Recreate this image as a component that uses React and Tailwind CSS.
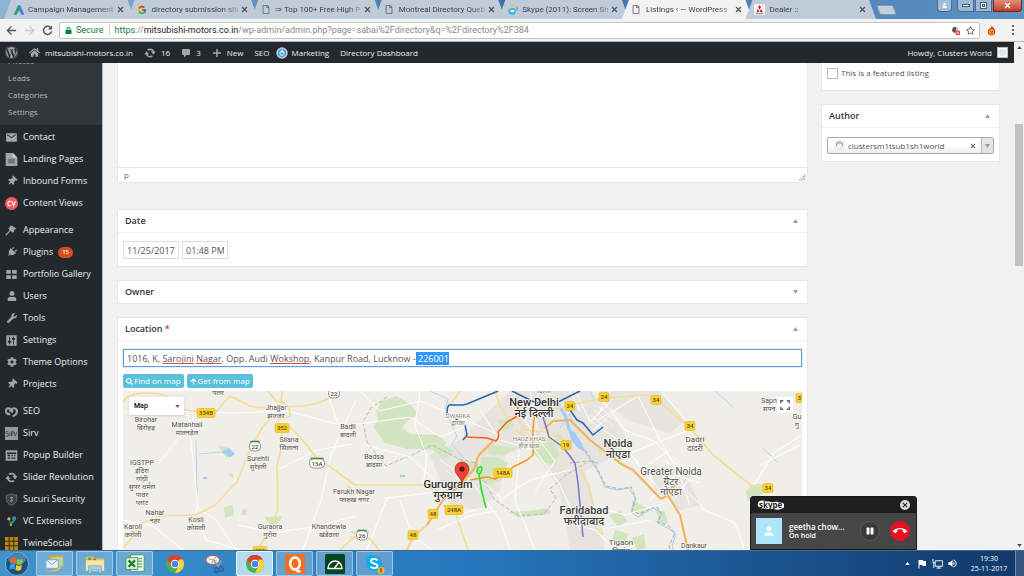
import React, { useEffect, useRef } from "react";
import {
  FaWordpress, FaHome, FaPlug, FaWrench, FaCog, FaSearch, FaArrowUp, FaThumbtack,
  FaLock, FaRegFile, FaRegStar, FaPause, FaUser,
} from "react-icons/fa";
import { FcGoogle } from "react-icons/fc";
import { MdEmail, MdCallEnd, MdPerson, MdVolumeUp, MdFlag } from "react-icons/md";

/* ---------- shared icons ---------- */

const UpdateIcon = ({ className }) => (
  <svg viewBox="0 0 20 20" className={className} fill="currentColor" aria-hidden="true">
    <path d="M10 2.500a7.500 7.500 0 0 1 7 5.200h2.500L15.500 13l-4-5.300h2.600A4.700 4.700 0 0 0 7.200 6.200L5.300 4.200A7.500 7.500 0 0 1 10 2.500zM.5 12.300L4.500 7l4 5.300H5.900a4.700 4.700 0 0 0 6.900 1.500l1.900 2A7.500 7.500 0 0 1 3 12.300z" />
  </svg>
);
const CommentIcon = ({ className }) => (
  <svg viewBox="0 0 20 20" className={className} fill="currentColor" aria-hidden="true">
    <path d="M4 2h12a2 2 0 0 1 2 2v8a2 2 0 0 1-2 2h-5l-5 5v-5H4a2 2 0 0 1-2-2V4a2 2 0 0 1 2-2z" />
  </svg>
);
const PlusIcon = ({ className }) => (
  <svg viewBox="0 0 20 20" className={className} fill="currentColor" aria-hidden="true">
    <path d="M8.500 2h3v6.500H18v3h-6.500V18h-3v-6.500H2v-3h6.500z" />
  </svg>
);
const PowerIcon = ({ className }) => (
  <svg viewBox="0 0 20 20" className={className} aria-hidden="true">
    <circle cx="10" cy="10" r="9.500" fill="#c9cdd0" />
    <circle cx="10" cy="10" r="7" fill="#3aa0d8" />
    <circle cx="10" cy="10.500" r="3.500" fill="none" stroke="#fff" strokeWidth="1.500" />
    <path d="M10 4.500v5" stroke="#fff" strokeWidth="2" />
  </svg>
);
const PageIcon = ({ className }) => (
  <svg viewBox="0 0 20 20" className={className} aria-hidden="true">
    <path d="M1 0h11l7 7v13H1z" fill="#a0a5aa" />
    <path d="M12 0v7h7" fill="#d4d7da" />
    <path d="M5 9h10v7H5z" fill="#6c7278" />
  </svg>
);
const CvIcon = ({ className }) => (
  <svg viewBox="0 0 20 20" className={className} aria-hidden="true">
    <circle cx="10" cy="10" r="10" fill="#ff5a5f" />
    <path d="M9 7.500A3 3 0 1 0 9 12.500M10.500 6.500l2.700 7 2.700-7" fill="none" stroke="#fff" strokeWidth="1.800" />
  </svg>
);
const BrushIcon = ({ className }) => (
  <svg viewBox="0 0 20 20" className={className} fill="currentColor" aria-hidden="true">
    <path d="M9 2l9 5-3 1-1 3-3 1-2-2-7 8-1.500-1.500L8 9 6.500 7z" />
    <path d="M7 5l7 7-2 2-7-7z" />
  </svg>
);
const GridIcon = ({ className }) => (
  <svg viewBox="0 0 20 20" className={className} fill="currentColor" aria-hidden="true">
    <path d="M2 3h7v6H2zM11 3h7v6h-7zM2 11h7v6H2zM11 11h7v6h-7z" />
  </svg>
);
const SlidersIcon = ({ className }) => (
  <svg viewBox="0 0 20 20" className={className} aria-hidden="true">
    <rect x="2" y="2" width="16" height="16" rx="1" fill="#a0a5aa" />
    <path d="M7 4v12M13 4v12" stroke="#23282d" strokeWidth="1.500" />
    <path d="M4.500 12h5M10.500 7.500h5" stroke="#23282d" strokeWidth="3" />
  </svg>
);
const SeoIcon = ({ className }) => (
  <svg viewBox="0 0 20 20" className={className} fill="none" stroke="currentColor" strokeWidth="3.200" aria-hidden="true">
    <path d="M8 14C0 15-1 5 5.500 5c3.500 0 3.500 4 1.500 5M11.500 17c8-1 9-12 2.500-12-4.500 0-4.500 5-1.500 6" />
  </svg>
);
const SirvIcon = ({ className }) => (
  <svg viewBox="0 0 20 20" className={className} aria-hidden="true">
    <rect width="20" height="20" fill="#999" />
    <path d="M5 7H2v3h3v4H1M7.500 7v7M10 14V7h2.500v3.500H10l3 3.500M14 7l2 7 2.500-7" fill="none" stroke="#3c4147" strokeWidth="1.200" />
  </svg>
);
const PopupIcon = ({ className }) => (
  <svg viewBox="0 0 20 20" className={className} aria-hidden="true">
    <rect x="1" y="2" width="18" height="16" fill="#a0a5aa" />
    <path d="M3 6.500h14M4 10h4M4 14h4M10 10h2M14 10h2M10 14h6" stroke="#23282d" strokeWidth="2" />
  </svg>
);
const ShieldIcon = ({ className }) => (
  <svg viewBox="0 0 20 20" className={className} aria-hidden="true">
    <path d="M10 1c3 2 5 2 8 2v7c0 5-5 8-8 9-3-1-8-4-8-9V3c3 0 5 0 8-2z" fill="#3c4147" stroke="#82878c" />
    <path d="M12.500 7.500c-3-2-5 .5-2.500 2s2 4-2.500 2.500" fill="none" stroke="#c0c4c8" strokeWidth="1.500" />
  </svg>
);
const VcIcon = ({ className }) => (
  <svg viewBox="0 0 20 20" className={className} aria-hidden="true">
    <circle cx="6" cy="6" r="2.500" fill="#f0ad30" />
    <circle cx="14" cy="5" r="3" fill="#3f8fc8" />
    <path d="M5 7l4 4 5-5 2 2-5 6-1 4-2-4z" fill="#2a9a80" />
    <circle cx="9" cy="15" r="2" fill="#7ab648" />
  </svg>
);
const TwineIcon = ({ className }) => (
  <svg viewBox="0 0 20 20" className={className} aria-hidden="true">
    <rect width="20" height="20" fill="#b8860f" />
    <path d="M6.500 0v20M13.500 0v20M0 6.500h20M0 13.500h20" stroke="#2b2a20" strokeWidth="1.500" />
  </svg>
);
const ChromeLogo = ({ className }) => (
  <svg viewBox="0 0 20 20" className={className} aria-hidden="true">
    <circle cx="10" cy="10" r="10" fill="#4caf50" />
    <path d="M10 10L1.340 5A10 10 0 0 1 18.660 5z" fill="#e2402f" />
    <path d="M1.340 5L6 12.500 10 5.400h8.660A10 10 0 0 0 1.340 5z" fill="#e2402f" />
    <path d="M18.660 5A10 10 0 0 1 10 20l4.100-7.700L14 5.400z" fill="#fdd23c" />
    <circle cx="10" cy="10" r="4.700" fill="#fff" />
    <circle cx="10" cy="10" r="3.700" fill="#4285f4" />
  </svg>
);

/* ---------- browser chrome ---------- */

const AdwordsIcon = () => (
  <svg viewBox="0 0 20 20" className="size-3" aria-hidden="true">
    <path d="M8 2h4l7 16h-5L8 6z" fill="#3b83e0" />
    <path d="M8 3l3 6-5 9H1z" fill="#27a55a" />
  </svg>
);
const SkypeTabIcon = () => (
  <svg viewBox="0 0 20 20" className="size-3" aria-hidden="true">
    <path d="M2 11c0-5 12-6 13-1 0 5-2 8-6 8s-7-3-7-7z" fill="#3bb3e6" />
    <path d="M5 11c2-2 7-2 8 0s-6 4-8 1z" fill="#d8f1fb" />
    <path d="M5 7c2-5 10-6 12-2" fill="none" stroke="#e9c53c" strokeWidth="1.800" />
    <path d="M15 6c3 1 3 4 1 6" fill="none" stroke="#3bb3e6" strokeWidth="1.800" />
  </svg>
);
const MitsubishiIcon = () => (
  <svg viewBox="0 0 20 20" className="size-[11px] bg-[#eef0f2]" aria-hidden="true">
    <path d="M10 2l2.500 4-2.500 4-2.500-4zM7 9l2.500 3.500L8 15H4zM13 9l-2.500 3.500L12 15h4z" fill="#d8222a" />
    <path d="M3 17.500h14" stroke="#777" strokeWidth="1.500" />
  </svg>
);

const fileIcon = <FaRegFile className="h-[9px] w-[8px] text-[#666]" />;
const TABS = [
  { title: "Campaign Management", icon: <AdwordsIcon /> },
  { title: "directory submission site", icon: <FcGoogle className="size-[10px]" /> },
  { title: "⇒ Top 100+ Free High P", icon: fileIcon },
  { title: "Montreal Directory Queb", icon: fileIcon },
  { title: "Skype (2011): Screen Sha", icon: <SkypeTabIcon /> },
  { title: "Listings ‹ — WordPress", icon: fileIcon, active: true },
  { title: "Dealer ::", icon: <MitsubishiIcon /> },
];

function Cross({ className }) {
  return (
    <svg viewBox="0 0 10 10" className={className} aria-hidden="true">
      <path d="M1.500 1.500l7 7M8.500 1.500l-7 7" stroke="currentColor" strokeWidth="1.800" fill="none" />
    </svg>
  );
}

function TabStrip() {
  return (
    <div className="flex h-[19px] shrink-0 items-start justify-between bg-linear-to-r from-[#8fb3d4] via-[#3a6fa8] to-[#5f93c4]">
      <div className="flex h-full pl-1">
        <div className="flex h-full w-[865px]" role="tablist">
          {TABS.map((t) => (
            <div
              key={t.title}
              className={
                "-mr-[7px] flex min-w-0 flex-1 items-center pr-[9px] pl-[7px] [clip-path:polygon(7px_0,calc(100%-7px)_0,100%_100%,0_100%)] " +
                (t.active ? "relative bg-[#f2f2f2]" : "bg-[#bfcbd9]")
              }
            >
              <span className="flex w-[15px] shrink-0 justify-center">{t.icon}</span>
              <button
                role="tab"
                aria-selected={!!t.active}
                className="min-w-0 flex-1 whitespace-nowrap pl-[2px] text-left font-[Roboto,sans-serif] text-[8px] leading-[12px] text-[#3c3f44] [mask-image:linear-gradient(to_right,black_82%,rgba(0,0,0,0.3))]"
              >
                {t.title}
              </button>
              <button aria-label="Close tab" className="ml-px flex size-[10px] items-center justify-center text-[#555]">
                <Cross className="size-[7px]" />
              </button>
            </div>
          ))}
        </div>
        <button aria-label="New tab" className="ml-[9px] mt-[5px] h-[10px] w-[17px] skew-x-[20deg] rounded-[2px] border border-[#8296ad] bg-[#c3cedb]" />
      </div>
      <div className="flex gap-px pr-[2px] text-white">
        <button aria-label="Profile" className="mr-1 flex h-[12px] w-[15px] items-center justify-center rounded-b border border-t-0 border-[#4c6a8c] bg-[#a3bdd8]">
          <FaUser className="size-[5px]" />
        </button>
        <button aria-label="Minimize" className="flex h-[12px] w-[17px] items-center justify-center rounded-bl border border-t-0 border-[#4c6a8c] bg-[#9db9d6]">
          <span className="h-[3px] w-2 border border-[#4a5a70] bg-white" />
        </button>
        <button aria-label="Restore" className="flex h-[12px] w-[17px] items-center justify-center border border-t-0 border-[#4c6a8c] bg-[#9db9d6]">
          <span className="size-[7px] border border-[#4a5a70] bg-white p-px"><span className="block size-full border border-[#4a5a70]" /></span>
        </button>
        <button aria-label="Close" className="flex h-[12px] w-[29px] items-center justify-center rounded-br border border-t-0 border-[#6e2a20] bg-linear-to-b from-[#dd8f80] to-[#c23a22]">
          <Cross className="size-[7px]" />
        </button>
      </div>
    </div>
  );
}

function Toolbar() {
  return (
    <div className="flex h-[23px] shrink-0 items-center border-b border-[#b5b5b5] bg-[#f2f2f2] pr-[7px] pl-[6px]">
      <div className="flex items-center gap-[7px] pr-[6px]">
        <button aria-label="Back" className="text-[#555]">
          <svg viewBox="0 0 12 12" className="size-[11px]" fill="none" stroke="currentColor" strokeWidth="1.500"><path d="M11 6H2M6 1.500L1.500 6 6 10.500" /></svg>
        </button>
        <button aria-label="Forward" className="text-[#ccc]">
          <svg viewBox="0 0 12 12" className="size-[11px]" fill="none" stroke="currentColor" strokeWidth="1.500"><path d="M1 6h9M6 1.500L10.500 6 6 10.500" /></svg>
        </button>
        <button aria-label="Reload" className="text-[#555]">
          <svg viewBox="0 0 12 12" className="size-[11px]" fill="none" stroke="currentColor" strokeWidth="1.700"><path d="M10 3.500A4.500 4.500 0 1 0 10.500 7" /><path d="M11 .5v4.500H6.500z" fill="currentColor" stroke="none" /></svg>
        </button>
      </div>
      <div className="flex h-[17px] flex-1 items-center rounded-[2px] border border-[#c4c4c4] bg-white pr-1 pl-[5px] font-[Roboto,sans-serif] text-[9px] leading-[13px]">
        <FaLock className="size-[7px] text-[#0b8043]" />
        <span className="pl-[4px] text-[#0b8043]">Secure</span>
        <span className="mx-[5px] h-[10px] w-px bg-[#ccc]" />
        <span className="flex-1 text-[#8a8a8a]">
          <span className="text-[#0b8043]">https</span>://<span className="text-[#222]">mitsubishi-motors.co.in</span>/wp-admin/admin.php?page=sabai%2Fdirectory&amp;q=%2Fdirectory%2F384
        </span>
        <button aria-label="Location blocked" className="mr-[6px]">
          <svg viewBox="0 0 12 12" className="size-[9px]"><path d="M6 1a4 4 0 0 0-1 8l2-2V2z" fill="#555" /><path d="M7 2a4 4 0 0 1 2 3" stroke="#555" fill="none" /><rect x="6" y="6" width="6" height="6" rx="1" fill="#e0443a" /><path d="M7.500 7.500l3 3m0-3l-3 3" stroke="#fff" /></svg>
        </button>
        <button aria-label="Bookmark"><FaRegStar className="size-[9px] text-[#555]" /></button>
      </div>
      <button aria-label="Extension" className="ml-[7px]">
        <svg viewBox="0 0 12 14" className="h-[11px] w-[9px]"><path d="M6 0c1 2 5 4 5 8.500a5 5 0 0 1-10 0C1 6 3 4 4 4c1 0 2-2 2-4z" fill="#ea4a1f" /><circle cx="6" cy="9" r="3.500" fill="#f9a825" /><path d="M4 8.500h1.500M6.500 8.500H8M4.500 10.500h3" stroke="#5a2a00" strokeWidth="1" /></svg>
      </button>
      <button aria-label="Menu" className="ml-[12px] flex w-[9px] flex-col items-center gap-[2px]">
        <span className="size-[2px] bg-[#666]" /><span className="size-[2px] bg-[#666]" /><span className="size-[2px] bg-[#666]" />
      </button>
    </div>
  );
}

/* ---------- wordpress admin ---------- */

function AdminBar() {
  const item = "flex items-center gap-[5px]";
  return (
    <header className="z-10 flex h-[21px] shrink-0 items-center justify-between bg-[#23282d] pr-[6px] pl-[5px] text-[8px] leading-[12px] text-[#eee]">
      <nav className="flex items-center gap-[11px]" aria-label="Toolbar">
        <a href="#wp" aria-label="WordPress"><FaWordpress className="size-[13px] text-[#a0a5aa]" /></a>
        <a href="#site" className={item}><FaHome className="size-[11px] text-[#a0a5aa]" />mitsubishi-motors.co.in</a>
        <a href="#updates" className={item}><UpdateIcon className="size-3 text-[#a0a5aa]" />16</a>
        <a href="#comments" className={item}><CommentIcon className="size-[10px] text-[#a0a5aa]" />3</a>
        <a href="#new" className={item}><PlusIcon className="size-[10px] text-[#a0a5aa]" />New</a>
        <a href="#seo">SEO</a>
        <a href="#marketing" className="-ml-1 flex items-center gap-[3px]"><PowerIcon className="size-3" />Marketing</a>
        <a href="#dashboard">Directory Dashboard</a>
      </nav>
      <a href="#profile" className={item}>
        Howdy, Clusters World
        <span className="size-[11px] border border-[#bbb] bg-[#f8f8f8] p-px"><span className="block size-full rounded-full bg-[#e6e6e6]" /></span>
      </a>
    </header>
  );
}

const NAV = [
  [
    ["Contact", MdEmail],
    ["Landing Pages", PageIcon],
    ["Inbound Forms", FaThumbtack, "rotate-45"],
    ["Content Views", CvIcon],
  ],
  [
    ["Appearance", BrushIcon],
    ["Plugins", FaPlug, "rotate-45"],
    ["Portfolio Gallery", GridIcon],
    ["Users", FaUser],
    ["Tools", FaWrench],
    ["Settings", SlidersIcon],
    ["Theme Options", FaCog],
    ["Projects", FaThumbtack, "rotate-45"],
  ],
  [
    ["SEO", SeoIcon],
    ["Sirv", SirvIcon],
    ["Popup Builder", PopupIcon],
    ["Slider Revolution", UpdateIcon],
    ["Sucuri Security", ShieldIcon],
    ["VC Extensions", VcIcon],
    ["TwineSocial", TwineIcon],
  ],
];
const LARGE = ["Landing Pages", "Content Views", "Sirv", "Contact", "Slider Revolution", "SEO", "TwineSocial", "Portfolio Gallery", "Appearance", "Settings", "Sucuri Security", "VC Extensions", "Popup Builder"];

function Sidebar() {
  return (
    <nav className="w-[103px] shrink-0 overflow-hidden border-r border-[#b4b6b8] bg-[#23282d] text-[9px] leading-[12px] text-[#eee]" aria-label="Main menu">
      <ul className="-mt-[11px] mb-px bg-[#32373c] pb-[5px] text-[8px] text-[#b4b9be]">
        {["Photos", "Leads", "Categories", "Settings"].map((s) => (
          <li key={s} className="flex h-[17px] items-center pl-2"><a href="#sub">{s}</a></li>
        ))}
      </ul>
      <div className="flex flex-col gap-[5px]">
        {NAV.map((group, i) => (
          <ul key={i}>
            {group.map(([label, Icon, extra]) => (
              <li key={label} className="h-[22px]">
                <a href="#item" className="flex h-full items-center gap-[5px] pl-[5px]">
                  <span className="flex size-[13px] items-center justify-center text-[#a0a5aa]">
                    <Icon className={(LARGE.includes(label) ? "size-[13px] " : "size-[10px] ") + (extra || "")} />
                  </span>
                  {label}
                  {label === "Plugins" && (
                    <span className="rounded-full bg-[#d54e21] px-[4px] text-[6px] leading-[11px] font-semibold text-white">15</span>
                  )}
                </a>
              </li>
            ))}
          </ul>
        ))}
      </div>
    </nav>
  );
}

function Caret({ down }) {
  return (
    <svg viewBox="0 0 6 5" className="h-[4px] w-[5px] text-[#999]" fill="currentColor" aria-hidden="true">
      <path d={down ? "M0 0h6L3 5z" : "M3 0l3 5H0z"} />
    </svg>
  );
}

function Panel({ title, required, collapsed, children }) {
  return (
    <section className="border border-[#e8e8e8] bg-white">
      <header className="flex h-[22px] items-center justify-between pr-[9px] pl-[7px]">
        <h2 className="font-semibold text-[#32373c]">
          {title} {required && <span className="text-[#b94a48]">*</span>}
        </h2>
        <button aria-label={"Toggle panel: " + title}><Caret down={collapsed} /></button>
      </header>
      {!collapsed && <div className="border-t border-[#f0f0f0]">{children}</div>}
    </section>
  );
}

function AddressField() {
  const ref = useRef(null);
  const value = "1016, K, Sarojini Nagar, Opp. Audi Wokshop, Kanpur Road, Lucknow - 226001";
  useEffect(() => {
    const el = ref.current;
    el.focus({ preventScroll: true });
    el.setSelectionRange(value.length - 7, value.length);
  }, []);
  const misspelt = "underline decoration-[#e0474c] decoration-1 underline-offset-2";
  return (
    <div className="relative">
      <input
        ref={ref}
        aria-label="Location address"
        spellCheck={false}
        defaultValue={value}
        className="block h-[18px] w-full border border-[#5b9dd9] bg-white px-[3px] text-[9px] leading-[13px] text-[#555] shadow-[0_0_1px_#5b9dd9] outline-none selection:bg-[#3297fd] selection:text-white"
      />
      <div aria-hidden="true" className="pointer-events-none absolute inset-0 flex items-center overflow-hidden border border-transparent px-[3px] whitespace-pre text-transparent">
        <span>1016, K, <span className={misspelt}>Sarojini</span> <span className={misspelt}>Nagar</span>, Opp. Audi <span className={misspelt}>Wokshop</span></span>
      </div>
    </div>
  );
}

/* ---------- map ---------- */

function Label({ x, y, en, hi, size = 7, weight = 400, fill = "#55504a" }) {
  const lines = [en, ...[].concat(hi || [])];
  return (
    <text x={x} y={y} textAnchor="middle" fontSize={size} fontWeight={weight} fill={fill} stroke="#f7f6f3" strokeWidth="1.500" paintOrder="stroke" fontFamily="Roboto, 'Noto Sans', sans-serif">
      {lines.map((l, i) => (
        <tspan key={i} x={x} dy={i ? size + (size > 8 ? 0 : 1) : 0}>{l}</tspan>
      ))}
    </text>
  );
}
function Shield({ x, y, n }) {
  const w = n.length > 2 ? n.length * 4 + 2 : 10;
  return (
    <g>
      <rect x={x - w / 2} y={y - 4.500} width={w} height="9" rx="1.500" fill="#f9d030" stroke="#d9ac14" strokeWidth=".5" />
      <text x={x} y={y + 2.200} textAnchor="middle" fontSize="6" fontWeight="500" fill="#5a4c14" fontFamily="Roboto, sans-serif">{n}</text>
    </g>
  );
}
function StateShield({ x, y, n }) {
  const w = n.length * 4 + 3;
  return (
    <g>
      <rect x={x - w / 2} y={y - 4.500} width={w} height="9.500" rx="4" fill="#fff" stroke="#777" strokeWidth=".8" />
      <path d={`M${x - w / 2 + 1} ${y - 4.500}h${w - 2}`} stroke="#3d8b40" strokeWidth="1.600" />
      <text x={x} y={y + 2.600} textAnchor="middle" fontSize="6" fontWeight="500" fill="#444" fontFamily="Roboto, sans-serif">{n}</text>
    </g>
  );
}

function MapDrawing() {
  return (
    <svg viewBox="123 391 679 159" preserveAspectRatio="xMinYMin slice" className="block h-[159px] w-full bg-[#f0eee9]" role="img" aria-label="Map of Delhi region">
      <g fill="#e7e4df">
        <path d="M430 455l30-15 30-30 20-19h80l20 20 15 25-10 20-30 15 10 40 10 39h-35l-10-60-30-45-25 10-5 35-20 20-30-5-10-25z" />
        <path d="M600 391h60l25 30-15 12-40-12-22-15zM650 465l35 5 15 35-20 5-25-20z" />
      </g>
      <g fill="#d3e4c0">
        <path d="M382 401l14-5 14 8 8 10-9 6-7 8 8 6 28 1 9 8-10 7-30-1-22-6-12-17 5-5-2-10z" />
        <path d="M432 450l12-5 10 6-10 8zM455 458l22 5-4 6zM481 457l15 0 12 6-7 18-14 4-6-10zM486 444l30 4-12 8-15-2zM537 447l16-6 6 12-4 12-14-4-8-8zM550 437l10-3 5 6-8 5zM508 512l20-1 20-3 3 6-30 3zM496 420l14-2 4 8-8 6zM746 490l8-6 9 0 2 8-12 10-6-2z" />
        <path d="M264 517l18-1-4 9-7 1zM224 507l9-2 1 10-9 3zM243 508l4 2-1 6-5-2zM218 445l10 3 6 8-8 2zM229 473l4 1 1 5-4-2zM347 485l4 2v9l-4-3zM350 531l20 0-2 3-16 0z" />
        <path d="M609 515l12-4 6 10-9 6zM632 500l15 8-4 8-10-5zM615 530l14 4-5 8-12-2zM655 508l10 4 3 12-9-2zM632 538l12-4 2 14-9 2zM597 449l6 3-3 4z" />
      </g>
      <g fill="#a3ccf5">
        <path d="M221 452l8-4 6 6-5 3zM203 477h4v2h-4zM140 475l6 3-2 5-5-2zM400 475h5v2h-5zM443 505l5 1-2 3zM569 430l6 2 8 14-4 3-8-9z" />
      </g>
      <g fill="none" stroke="#a3ccf5">
        <path d="M557 403l8 12 4 14 9 16 6 5" strokeWidth="3" />
        <path d="M560 428l9-14 4 10M430 391l18 8-3 12 12 25-5 8 12 15M590 391l4 8M715 391l18 16M763 448l14 14M196 440l1 55M199 454l22-2" strokeWidth=".8" />
        <path d="M585 452l12 18 8 17 12 3 12-2 6 10-4 14 7 5 15-9 8 5-3 10 10 5 8 6-4 12 3 10" strokeWidth="1" />
      </g>
      <path d="M585 450l12 18 9 18 14 3 11-2 5 11-4 13 7 3 17-8 6 8-5 8 11 3 7 8-6 13 4 11" fill="none" stroke="#a9abad" strokeDasharray="4 2" />
      <path d="M387 397l-16 11-8 14 4 20 19 24 13-6 13-5 20-10 27 14 17 4 8 18 10 18 24 17 26-2 12-16-6-9 16-14 20-12M570 463l20-2 8 2" fill="none" stroke="#bbb8b4" strokeWidth="1" strokeDasharray="4 2" />
      <g fill="none" stroke="#fff" strokeWidth="1">
        <path d="M123 412l50-1 60 2 54-2 69 18M188 413l10 95 18 12 20 30M200 410l-42 55M196 508l10 32 35 10M356 400l-25 55-10 45-18 50M327 391l10 30 19 15M350 425l60-8 30 20 25-10M360 391l20 20 40-10 30 12 45 20M365 445l45 12 28 26M367 550l20-52 50-6M400 500l13 37 20 13M420 391l-5 35 12 30-4 30M440 460l30 20 30 40 10 30M480 410l20 30 35 10 25 35 20 45M500 500l30-20 40-10M520 440l-5 60 20 50M540 391l-15 30 30 40-20 30M575 391l15 30 30 20 20 25M598 420l40-24 20 40 22 40 10 30M610 410l15 20 30 12 25 25 20 12M625 455l30-12 32-12M640 470l30-20M650 500l25-25 25 8M636 460l40 50M700 508l35 15 10 27M704 508l-40-38M690 425l-30-34M802 435l-28 18-20 32M768 487l12 30 22 15M800 445l-40 20M123 520l30 6 30 24M238 525l35 8 45-7 38-10M277 470l40-20 35-6M437 530l35-15 25-4M560 520l35 10 20 20M570 391l10 20M610 391l-12 24M650 520l-40 8M590 505l35 10 40-12" />
        <path d="M590 415l18 14M594 410l18 15M598 406l18 15M588 424l25-25M593 430l28-24M665 460l25 22M672 455l20 20M680 470l-18 22M690 478l-18 24M440 500l20 14 22-6M446 470l24 20M480 480l24 20M530 391l8 40 24 10M545 400l10 25" strokeWidth=".8" />
      </g>
      <g fill="none" stroke="#f7dc98" strokeWidth="1.700" strokeLinejoin="round">
        <path d="M123 403c4-12 28-11 42-8l14 14 27 4 9 0 15-17q8 3 16 8t19 3M331 397q-14 8-30 9l-16 1M268 391l8 10 9 3M282 391l-1 10 8 6 1 9-12 4" />
        <path d="M276 415q-8 5-14 13l-12 22-13 32-22 23-19 10-36 1-17 7-13 17-7 8M283 424q10 4 14 10l9 10 9 12 40 29h68l17 8 20-1M282 427l-1 23-4 15 1 45-13 27-7 13M356 535l-16 15M350 537l20 2 9 11" />
        <path d="M453 498l4 20 11 32M495 391l5 15 10 15M510 405l15 25 30 3M580 470l9 15 4 20 10 30M570 405l33-7 44-3 10 5 30 25 15 17 11 13 40 32 17-2M570 405l-30 8M460 391l-10 14M515 430l20 12 30-3" />
      </g>
      <g fill="none" stroke="#f3b35d" strokeWidth="2.200" strokeLinejoin="round">
        <path d="M427 525l16-25 17-15 15-17q2-10 4-13l14-14M545 428l8-7 17-1 20 20 22 17 11 8 10 5 27 28q4 2 8-6l7-7M667 494l13 21 8 35" />
        <path d="M407 550l6-13 14-12" stroke="#f7d48a" />
      </g>
      <g fill="none" strokeWidth="1.500" strokeLinejoin="round">
        <path d="M498 391l-31 13-4 1h-14q-2 2-2 8l18 12 2 10-4 5M512 391l24 12 22-1 22-11M570 410l7 10 6 3 10 12 10-8" stroke="#2565ae" />
        <path d="M465 437l22 1 9 3q4-4 2-9l9-10 9-5 2-10" stroke="#f4611e" />
        <path d="M470 480l17-3 8 2 12-6 6-6 14-7 6-5v-27l2-15" stroke="#f8961e" />
        <path d="M543 417l4 13 2 7 14 10 12 16 3 20 5 54" stroke="#7b74c0" />
        <path d="M480 474c-5-1-3-6 0-7s2 5-1 8l1 5 1 8 5 20" stroke="#1ee81e" strokeWidth="1.600" />
      </g>
      <Shield x={206} y={413} n="334B" />
      <Shield x={282} y={428} n="352" />
      <Shield x={260} y={551} n="352" />
      <Shield x={570} y={406} n="24" />
      <Shield x={604} y={397} n="24" />
      <Shield x={656} y={400} n="34" />
      <Shield x={690} y={426} n="34" />
      <Shield x={768} y={488} n="34" />
      <Shield x={801} y={398} n="33" />
      <Shield x={566} y={445} n="19" />
      <Shield x={503} y={473} n="148A" />
      <Shield x={454} y={510} n="248A" />
      <Shield x={433} y={514} n="48" />
      <Shield x={413} y={535} n="48" />
      <StateShield x={255} y={446} n="22" />
      <StateShield x={334} y={393} n="22" />
      <StateShield x={317} y={463} n="15A" />
      <StateShield x={362} y={535} n="26" />
      <Label x={218} y={395} en="पलर" />
      <Label x={146} y={422} en="Birohar" hi="बिरोहड़" />
      <Label x={187} y={427} en="Matanhail" hi="मातनहेल" />
      <Label x={276} y={410} en="Jhajjar" hi="झज्जर" />
      <Label x={348} y={429} en="Badli" hi="बादली" />
      <Label x={289} y={442} en="Silana" hi="सिलाना" />
      <Label x={258} y={461} en="Surehti" hi="सुरेहती" />
      <Label x={142} y={465} en="IGSTPP" hi={["इंदिरा", "गांधी", "सुपर थर्मल", "पावर", "प्लांट"]} />
      <Label x={374} y={459} en="Badsa" hi="बादसा" />
      <Label x={354} y={494} en="Farukh Nagar" hi="फारुख नगर" />
      <Label x={155} y={515} en="Nahar" hi="नहर" />
      <Label x={196} y={522} en="Kosli" hi="कोसली" />
      <Label x={133} y={529} en="Karoli" hi="करोली" />
      <Label x={270} y={529} en="Guraora" hi="गुरोरा" />
      <Label x={329} y={529} en="Khandewla" hi="खंडेवला" />
      <Label x={458} y={418} en="DWARKA" hi="द्वारका" size={6} fill="#8a857e" />
      <Label x={529} y={441} en="HAUZ KHAS" hi="हौज़ खास" size={6} fill="#8a857e" />
      <Label x={544} y={393} en="दिल्ली" size={6} />
      <Label x={534} y={406} en="New Delhi" hi="नई दिल्ली" size={11} weight={500} fill="#2c2c2c" />
      <Label x={618} y={447} en="Noida" hi="नोएडा" size={11} weight={500} fill="#3c3c3c" />
      <Label x={671} y={475} en="Greater Noida" hi={["ग्रेटर", "नोएडा"]} size={10} fill="#555" />
      <Label x={695} y={442} en="Dadri" hi="दादरी" size={8} />
      <Label x={448} y={488} en="Gurugram" hi="गुरुग्राम" size={11} weight={500} fill="#2c2c2c" />
      <Label x={584} y={514} en="Faridabad" hi="फरीदाबाद" size={11} weight={500} fill="#3c3c3c" />
      <Label x={621} y={545} en="Tigaon" hi="तिगांव" size={8} />
      <Label x={694} y={548} en="Dankaur" />
      <Label x={769} y={403} en="Sapn" hi="सपन" />
      <Label x={797} y={419} en="Gu" hi="गु" />
      <path d="M462 484c0-6-7-9-7-15a7 7 0 0 1 14 0c0 6-7 9-7 15z" fill="#ea4335" stroke="#a52714" strokeWidth=".7" />
      <circle cx="462" cy="469" r="2.600" fill="#5c1410" />
    </svg>
  );
}

function MapView() {
  return (
    <div className="relative mt-[3px] overflow-hidden">
      <MapDrawing />
      <div className="absolute top-[6px] left-[6px] h-[18px] w-[55px] rounded-[1px] bg-white shadow-sm">
        <select aria-label="Map type" className="h-full w-full appearance-none bg-transparent pl-[5px] font-[Roboto,sans-serif] text-[7px] leading-[12px] font-medium text-black">
          <option>Map</option>
        </select>
        <svg viewBox="0 0 6 4" className="pointer-events-none absolute top-2 right-1 h-[3px] w-[5px]" fill="#666"><path d="M0 0h6L3 4z" /></svg>
      </div>
      <button aria-label="Full screen" className="absolute top-[6px] right-[9px] flex size-4 items-center justify-center bg-white">
        <svg viewBox="0 0 12 12" className="size-[10px]" fill="none" stroke="#666" strokeWidth="1.800"><path d="M1 4V1h3M8 1h3v3M11 8v3H8M4 11H1V8" /></svg>
      </button>
    </div>
  );
}

function Content() {
  const btn = "flex h-[14px] items-center gap-px rounded-[2px] bg-[#5bc0de] px-[3px] text-[8px] leading-[12px] text-white";
  const field = "h-[18px] border border-[#ddd] bg-white px-[3px] text-[9px] leading-[13px] text-[#555]";
  return (
    <main className="flex min-w-0 flex-1 items-start gap-[13px] overflow-hidden bg-[#f1f1f1] pr-[14px] pl-[14px] text-[9px] leading-[12px] text-[#444]">
      <div className="flex min-w-0 flex-1 flex-col gap-[13px]">
        <div className="mb-[13px] flex h-[120px] flex-col border border-t-0 border-[#e8e8e8] bg-white">
          <textarea aria-label="Listing description" className="w-full flex-1 resize-none outline-none" />
          <div className="flex h-[15px] items-center justify-between border-t border-[#e8e8e8] pr-[1px] pl-[6px] text-[8px] text-[#666]">
            p
            <svg viewBox="0 0 8 8" className="mt-[5px] size-[7px]" fill="#b5a9b8" aria-hidden="true"><path d="M6 0h1.500v1.500H6zM4 2h1.500v1.500H4zM6 2h1.500v1.500H6zM2 4h1.500v1.500H2zM4 4h1.500v1.500H4zM6 4h1.500v1.500H6zM0 6h1.500v1.500H0zM2 6h1.500v1.500H2zM4 6h1.500v1.500H4zM6 6h1.500v1.500H6z" /></svg>
          </div>
        </div>
        <Panel title="Date">
          <div className="flex gap-[3px] px-[5px] pt-[8px] pb-[7px]">
            <input aria-label="Date" defaultValue="11/25/2017" className={field + " w-[56px]"} />
            <input aria-label="Time" defaultValue="01:48 PM" className={field + " w-[46px]"} />
          </div>
        </Panel>
        <Panel title="Owner" collapsed />
        <Panel title="Location" required>
          <div className="px-[5px] pt-[8px] pb-2">
            <AddressField />
            <div className="mt-[7px] flex gap-[3px]">
              <button className={btn}><FaSearch className="size-[7px]" />Find on map</button>
              <button className={btn}><FaArrowUp className="size-[7px]" />Get from map</button>
            </div>
            <MapView />
          </div>
        </Panel>
      </div>
      <aside className="flex w-[179px] shrink-0 flex-col gap-[13px]">
        <div className="border border-t-0 border-[#e8e8e8] bg-white px-[5px] pt-1 pb-[11px]">
          <label className="flex items-center gap-[3px] text-[8px] text-[#555]">
            <input type="checkbox" className="size-[11px] appearance-none border border-[#bbb] bg-white" />
            This is a featured listing
          </label>
        </div>
        <Panel title="Author">
          <div className="px-[5px] pt-[9px] pb-[7px]">
            <div className="relative flex h-[17px] items-center rounded-[2px] border border-[#aaa] bg-linear-to-b from-white from-50% to-[#eee]">
              <select aria-label="Author" className="h-full w-full appearance-none bg-transparent pl-[20px] text-[8px] leading-[12px] text-[#555]">
                <option>clustersm1tsub1sh1world</option>
              </select>
              <svg viewBox="0 0 12 12" className="pointer-events-none absolute left-[6px] size-[11px]"><rect width="12" height="12" fill="#f3f3f3" /><path d="M2 6c-1-6 9-6 8 0l-1 1-1-3H4L3 7z" fill="#aaa" /><path d="M4 4h4v4l-2 3-2-3z" fill="#fafafa" stroke="#ccc" strokeWidth=".5" /></svg>
              <button aria-label="Clear author" className="absolute right-[17px] text-[#666]"><Cross className="size-[6px]" /></button>
              <span className="pointer-events-none absolute inset-y-0 right-0 flex w-[12px] items-center justify-center border-l border-[#bbb] bg-[#e4e4e4]"><Caret down /></span>
            </div>
          </div>
        </Panel>
      </aside>
    </main>
  );
}

function Scrollbar() {
  return (
    <div className="flex w-[10px] shrink-0 flex-col items-center justify-between bg-[#f1f1f1] py-[3px]" aria-hidden="true">
      <svg viewBox="0 0 6 4" className="mt-px h-[3px] w-[5px]" fill="#444"><path d="M3 0l3 4H0z" /></svg>
      <div className="flex w-full flex-1 flex-col items-center pt-[75px]"><div className="h-[142px] w-[8px] bg-[#c1c1c1]" /></div>
      <svg viewBox="0 0 6 4" className="h-[3px] w-[5px]" fill="#444"><path d="M0 0h6L3 4z" /></svg>
    </div>
  );
}

function SkypeCall() {
  return (
    <div className="absolute right-[107px] bottom-0 z-20 w-[167px] overflow-hidden rounded-t-[3px] border border-[#1a1a1a] bg-[#464646] text-white">
      <div className="flex h-[16px] items-center justify-between bg-[#1f1f1f] px-[6px]">
        <span className="relative px-[2px] font-['Open_Sans',sans-serif] text-[8px] leading-[10px] font-bold text-[#1f1f1f]">
          <svg viewBox="0 0 24 10" preserveAspectRatio="none" className="absolute inset-0 size-full" fill="#fff" aria-hidden="true"><path d="M1 3c0-3 5-3 6-2 2 1 3 0 5 1s4-1 6 0 6 0 6 3-1 3-3 4-4 1-6 0-4 1-6 0-4 0-6-1-3-3-2-5z" /></svg>
          <span className="relative">skype</span>
        </span>
        <button aria-label="Close" className="flex size-[10px] items-center justify-center rounded-full bg-[#ddd] text-[#1f1f1f]"><Cross className="size-[6px]" /></button>
      </div>
      <div className="flex items-center py-[5px] pr-[6px] pl-[5px]">
        <span className="flex size-[26px] items-center justify-center bg-[#ade5fa]"><MdPerson className="size-[14px] text-white" /></span>
        <div className="flex-1 pl-[7px]">
          <p className="text-[8px] leading-[9px] font-semibold">geetha chow...</p>
          <p className="text-[7px] leading-[9px] font-semibold">On hold</p>
        </div>
        <button aria-label="Resume" className="mr-[10px] flex size-[20px] items-center justify-center rounded-full border border-[#5a5a5a] bg-[#3a3a3a]"><FaPause className="size-[8px]" /></button>
        <button aria-label="End call" className="flex size-[20px] items-center justify-center rounded-full bg-[#e81123]"><MdCallEnd className="size-[14px]" /></button>
      </div>
    </div>
  );
}

/* ---------- taskbar ---------- */

const OutlookIcon = () => (
  <svg viewBox="0 0 24 20" className="h-[19px] w-[23px]"><path d="M6 2l14-1 1 10H7z" fill="#f0a030" /><path d="M9 4l12-1v10H9z" fill="#b9d98a" /><path d="M3 6h13v9H3z" fill="#e8f1fa" stroke="#7aa7d6" /><path d="M3 6l6 5 7-5" fill="none" stroke="#7aa7d6" /><path d="M2 17c8 2 15-1 18-7l-1 5c-4 4-11 5-17 2z" fill="#f5b540" /></svg>
);
const FolderIcon = () => (
  <svg viewBox="0 0 24 22" className="h-[20px] w-[22px]"><path d="M2 3h8l2 2h10v14H2z" fill="#e8c45a" /><path d="M4 4h4v3H4z" fill="#4caf50" /><path d="M10 5h3v2h-3z" fill="#d84a3a" /><path d="M2 7h20v11H2z" fill="#f9e7a0" /><path d="M5 13h14v8h-3v-4H8v4H5z" fill="#9fd0f0" stroke="#5f9ecb" strokeWidth=".7" /></svg>
);
const ExcelIcon = () => (
  <svg viewBox="0 0 22 22" className="size-[20px]"><path d="M6 1h15v18H6z" fill="#fff" stroke="#4c9a52" /><path d="M14 5h5M14 8h5M14 11h5M14 14h5" stroke="#6fb573" strokeWidth="1.500" /><path d="M1 4h13v13H1z" fill="#d9efd6" stroke="#3c9a48" /><path d="M4 7l7 7M11 7l-7 7" stroke="#1f7a30" strokeWidth="2.400" /></svg>
);
const SnipIcon = () => (
  <svg viewBox="0 0 22 22" className="size-[20px]"><ellipse cx="8.500" cy="6.500" rx="7.500" ry="5" fill="#f6f6f6" stroke="#cf5a5a" strokeWidth="1.300" /><path d="M4 5l9 3M12 3L7 10" stroke="#999" /><path d="M10 8l5 6M18 7l-4 8" stroke="#8aa0b8" strokeWidth="1.500" /><ellipse cx="12.500" cy="17.500" rx="2" ry="2.800" fill="none" stroke="#2f5f9e" strokeWidth="1.600" /><ellipse cx="18" cy="16.500" rx="2" ry="2.800" transform="rotate(-30 18 16.500)" fill="none" stroke="#2f5f9e" strokeWidth="1.600" /></svg>
);
const QIcon = () => (
  <svg viewBox="0 0 20 20" className="size-[20px]"><rect width="20" height="20" rx="2" fill="#f37021" /><ellipse cx="10" cy="9.500" rx="4.800" ry="6" fill="none" stroke="#fff" strokeWidth="2.600" /><path d="M10.500 15c1 3 3 3 5 2" stroke="#fff" strokeWidth="2" fill="none" /></svg>
);
const GaugeIcon = () => (
  <svg viewBox="0 0 20 20" className="size-[20px]"><rect width="20" height="20" rx="1.500" fill="#06451f" /><path d="M3 14.500a7 7.500 0 0 1 14 0zM9.500 14l4-5" fill="none" stroke="#fff" strokeWidth="1.500" /></svg>
);
const SkypeIcon = () => (
  <svg viewBox="0 0 20 20" className="size-[20px]"><circle cx="9" cy="9.500" r="7.500" fill="#00aff0" /><circle cx="5.500" cy="5.500" r="4.500" fill="#00aff0" /><circle cx="12.500" cy="13.500" r="4.500" fill="#00aff0" /><path d="M12.500 6.500C11 4 5.500 4.500 6 7.500c.5 2.500 6.500 1.500 6.500 4.500 0 2.500-5 3-7 .5" fill="none" stroke="#fff" strokeWidth="2" /><circle cx="16" cy="16.500" r="3.500" fill="#f5b52a" /><path d="M15 15.500l1-1v4" stroke="#333" fill="none" /></svg>
);

const APPS = [
  ["Mail", <OutlookIcon />, "open"],
  ["Explorer", <FolderIcon />, "open"],
  ["Excel", <ExcelIcon />, "open"],
  ["Chrome", <ChromeLogo className="size-[18px]" />, ""],
  ["Snipping Tool", <SnipIcon />, ""],
  ["Chrome window", <ChromeLogo className="size-[18px]" />, "active"],
  ["Quick app", <QIcon />, "open"],
  ["Gauge", <GaugeIcon />, "open"],
  ["Skype", <SkypeIcon />, "open"],
];

function Taskbar() {
  return (
    <footer className="flex h-[26px] shrink-0 items-center justify-between border-t border-[#3c6a92] bg-linear-to-r from-[#3f93ca] via-[#2779bf] via-45% to-[#12386a] text-white">
      <div className="flex h-full items-center pl-[5px]">
        <button aria-label="Start" className="mr-[7px]">
          <svg viewBox="0 0 24 24" className="size-[24px]">
            <circle cx="12" cy="12" r="11.500" fill="#1d4f80" stroke="#7fb2d8" />
            <ellipse cx="12" cy="7" rx="9" ry="5.500" fill="#6fa6cf" opacity=".6" />
            <path d="M6 6.500c2-1 3.500-1 5.200 0l-.8 5c-2-1-3.500-.8-5.200 0z" fill="#f0622d" />
            <path d="M12.200 7c2 1 3.500 1 5.800 0l-1 5c-2 1-4 .8-5.600 0z" fill="#8cc63f" />
            <path d="M5 12.500c2-1 3.500-.8 5.200 0l-.8 5c-2-1-3.500-1-5.200 0z" fill="#35a3e0" />
            <path d="M11.200 13c2 .8 3.500 1 5.600 0l-.8 5c-2 1-4 .8-5.600 0z" fill="#fdc82f" />
          </svg>
        </button>
        <div className="flex h-full gap-[3px]">
          {APPS.map(([name, icon, state]) => (
            <button
              key={name}
              aria-label={name}
              className={
                "flex h-full w-[37px] items-center justify-center rounded-[2px] " +
                (state === "active"
                  ? "border border-white/70 bg-[#b5d9ee]"
                  : state === "open"
                  ? "border border-white/40 bg-white/25"
                  : "")
              }
            >
              {icon}
            </button>
          ))}
        </div>
      </div>
      <div className="flex h-full items-center">
        <button aria-label="Show hidden icons" className="mr-[6px]"><svg viewBox="0 0 6 4" className="h-[3px] w-[5px]" fill="#fff"><path d="M3 0l3 4H0z" /></svg></button>
        <MdFlag className="mr-[4px] size-[12px]" />
        <svg viewBox="0 0 12 12" className="mr-[4px] size-[11px]" fill="none" stroke="#fff"><path d="M3.500 3h8v6h-8zM5 11h5M7.500 9v2M1 1v4h2M2 5v6" /></svg>
        <MdVolumeUp className="mr-[10px] size-[11px]" />
        <div className="w-[42px] text-center text-[7px] leading-[10px]">
          <p>19:30</p>
          <p>25-11-2017</p>
        </div>
        <button aria-label="Show desktop" className="ml-[5px] h-full w-[9px] border-l border-[#6f8fb5] bg-white/15" />
      </div>
    </footer>
  );
}

export default function App() {
  return (
    <div className="flex h-screen flex-col overflow-hidden bg-[#f1f1f1] font-['Open_Sans','Noto_Sans',sans-serif]">
      <TabStrip />
      <Toolbar />
      <div className="relative flex min-h-0 flex-1">
        <div className="flex min-w-0 flex-1 flex-col">
          <AdminBar />
          <div className="flex min-h-0 flex-1">
            <Sidebar />
            <Content />
          </div>
        </div>
        <Scrollbar />
        <SkypeCall />
      </div>
      <Taskbar />
    </div>
  );
}
